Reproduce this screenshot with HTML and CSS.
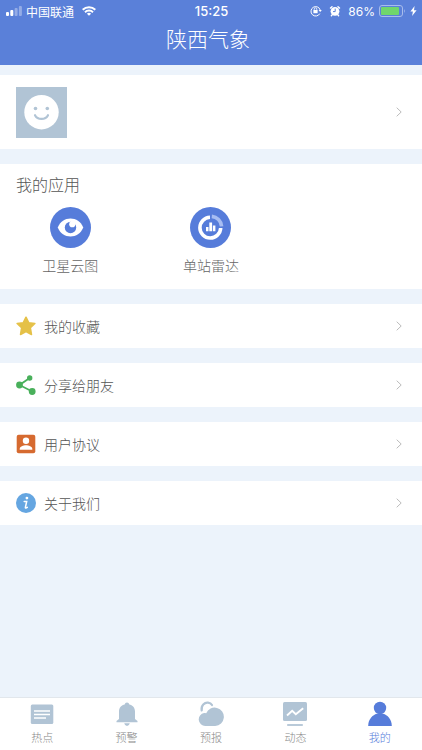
FILE: index.html
```
<!DOCTYPE html>
<html lang="zh-CN">
<head>
<meta charset="utf-8">
<meta name="viewport" content="width=device-width, initial-scale=1">
<title>陕西气象</title>
<link rel="stylesheet" href="styles.css">
</head>
<body>
<header class="header">
  <div class="status">
    <div class="status-side">
      <svg width="16" height="10" viewBox="0 0 16 10" fill="#fff" aria-hidden="true"><rect y="6" width="3" height="4" rx="1"/><rect x="4.3" y="4" width="3" height="6" rx="1"/><g opacity=".35"><rect x="8.6" y="2" width="3" height="8" rx="1"/><rect x="12.9" width="3" height="10" rx="1"/></g></svg>
      <span>中国联通</span>
      <svg class="wifi" width="14" height="10" viewBox="0 0 14 10" fill="none" stroke="#fff" stroke-width="2" aria-hidden="true"><path d="M.7 3.7a9 9 0 0 1 12.6 0M3 6.2a5.800 5.800 0 0 1 8 0"/><path d="M7 9.800 4.900 7.800a3 3 0 0 1 4.200 0z" fill="#fff" stroke="none"/></svg>
    </div>
    <time class="clock">15:25</time>
    <div class="status-side status-end">
      <svg width="12" height="12" viewBox="0 0 12 12" fill="none" stroke="#fff" aria-hidden="true"><path d="M9.8 8.600A4.700 4.700 0 1 1 10.200 5"/><path d="M8.600 4.900h3.200L10.200 7z" fill="#fff" stroke="none"/><path d="M4.200 5.200V4.100a1.300 1.300 0 0 1 2.600 0v1.100" stroke-width=".8"/><rect x="3.400" y="5" width="4.200" height="3.200" fill="#fff" stroke="none"/></svg>
      <svg class="alarm" width="12" height="12" viewBox="0 0 12 12" aria-hidden="true"><circle cx="6" cy="6.300" r="4.400" fill="#fff"/><path d="M1.500 3 3 1.700M10.500 3 9 1.700M3 10l-.6.700M9 10l.6.700" stroke="#fff" stroke-width="1.500" stroke-linecap="round"/><path d="M6.200 3.600v3H4" fill="none" stroke="#5a80d9"/></svg>
      <span class="percent">86%</span>
      <svg width="27" height="12" viewBox="0 0 27 12" aria-hidden="true"><rect x=".5" y=".5" width="23" height="11" rx="2.500" fill="none" stroke="#a9bdec"/><rect x="2" y="2" width="18" height="8" rx="1" fill="#70d66c"/><path d="M25 4q1.700 2 0 4z" fill="#a9bdec"/></svg>
      <svg width="7" height="10" viewBox="0 0 7 10" fill="#fff" aria-hidden="true"><path d="M4.600 0 .4 5.600h2.500L2.100 10l4.500-5.700H4z"/></svg>
    </div>
  </div>
  <h1 class="title">陕西气象</h1>
</header>

<main class="content">
  <a class="card profile" href="#profile" aria-label="个人资料">
    <svg class="avatar" width="51" height="51" viewBox="0 0 51 51" aria-hidden="true"><rect width="51" height="51" fill="#b1c4d5"/><circle cx="25.500" cy="25.200" r="17.200" fill="#fff"/><g fill="#b1c4d5"><circle cx="19.500" cy="21.500" r="1.800"/><circle cx="31.300" cy="21.500" r="1.800"/></g><path d="M19 28.200c2.600 5 10.400 5 13 0" fill="none" stroke="#b1c4d5" stroke-width="2.200" stroke-linecap="round"/></svg>
    <svg class="arrow" width="6" height="10" viewBox="0 0 6 10" aria-hidden="true"><path d="m.7.7 4.500 4.300L.7 9.300"/></svg>
  </a>

  <section class="card apps">
    <h2 class="apps-title">我的应用</h2>
    <div class="apps-grid">
      <a class="app" href="#satellite">
        <svg width="41" height="41" viewBox="0 0 41 41" aria-hidden="true"><circle cx="20.500" cy="20.500" r="20.500" fill="#567cda"/><path d="M7.700 20.500C10.200 14.600 15 11.500 20.500 11.500s10.300 3.100 12.800 9c-2.500 5.900-7.300 9-12.800 9s-10.300-3.100-12.800-9z" fill="#fff"/><circle cx="20.500" cy="20.500" r="5.700" fill="#567cda"/><circle cx="22.300" cy="17.200" r="3.100" fill="#fff"/></svg>
        <span>卫星云图</span>
      </a>
      <a class="app" href="#radar">
        <svg width="41" height="41" viewBox="0 0 41 41" aria-hidden="true"><circle cx="20.500" cy="20.500" r="20.500" fill="#567cda"/><g fill="none" stroke-width="3.600"><path d="M20 10.200a10.400 10.400 0 1 0 10.700 10.800" stroke="#fff"/><path d="M21.800 9.400a10.800 10.800 0 0 1 9.800 9.900" stroke="#a7bdf2"/></g><path d="M16 20h2.500v4.200H16zM19.300 15.500h2.800v8.700h-2.800zM22.900 18.500h2.500v5.700h-2.500z" fill="#fff"/></svg>
        <span>单站雷达</span>
      </a>
    </div>
  </section>

  <nav class="menu" aria-label="设置">
    <a class="card row" href="#favorites">
      <svg width="20" height="20" viewBox="0 0 20 20" aria-hidden="true"><path d="m10 1.200 2.700 5.500 6.200.8-4.500 4.300 1.100 6.700L10 15.500l-5.500 3 1.100-6.700L1.100 7.500l6.200-.8z" fill="#e5c148" stroke="#e5c148" stroke-width="1.500" stroke-linejoin="round"/></svg>
      <span>我的收藏</span>
      <svg class="arrow" width="6" height="10" viewBox="0 0 6 10" aria-hidden="true"><path d="m.7.7 4.500 4.300L.7 9.300"/></svg>
    </a>
    <a class="card row" href="#share">
      <svg width="20" height="20" viewBox="0 0 20 20" fill="#49b05b" aria-hidden="true"><path d="M13.700 3 3.500 10l12.700 6.500" fill="none" stroke="#49b05b" stroke-width="1.800"/><circle cx="13.700" cy="3" r="2.700"/><circle cx="3.500" cy="10" r="3.400"/><circle cx="16.200" cy="16.500" r="3.400"/></svg>
      <span>分享给朋友</span>
      <svg class="arrow" width="6" height="10" viewBox="0 0 6 10" aria-hidden="true"><path d="m.7.7 4.500 4.300L.7 9.300"/></svg>
    </a>
    <a class="card row" href="#agreement">
      <svg width="20" height="20" viewBox="0 0 20 20" aria-hidden="true"><rect x=".7" y=".7" width="18.600" height="18.600" rx="2" fill="#d66a30"/><circle cx="10" cy="6.800" r="3.200" fill="#fff"/><path d="M3.700 15.800v-.8c0-2.400 3.700-3.700 6.300-3.700s6.300 1.300 6.300 3.700v.8z" fill="#fff"/></svg>
      <span>用户协议</span>
      <svg class="arrow" width="6" height="10" viewBox="0 0 6 10" aria-hidden="true"><path d="m.7.7 4.500 4.300L.7 9.300"/></svg>
    </a>
    <a class="card row" href="#about">
      <svg width="20" height="20" viewBox="0 0 20 20" aria-hidden="true"><circle cx="10" cy="10" r="10" fill="#65a6e1"/><circle cx="10.900" cy="5.100" r="1.400" fill="#fff"/><path d="M8.200 8.500h2.500L9.400 14.300q-.1.900.6.700l1.300-.7" fill="none" stroke="#fff" stroke-width="1.500" stroke-linecap="round"/></svg>
      <span>关于我们</span>
      <svg class="arrow" width="6" height="10" viewBox="0 0 6 10" aria-hidden="true"><path d="m.7.7 4.500 4.300L.7 9.300"/></svg>
    </a>
  </nav>
</main>

<nav class="tabs" aria-label="主导航">
  <a class="tab" href="#hot">
    <svg width="26" height="26" viewBox="0 0 26 26" aria-hidden="true"><rect x="1.800" y="3.500" width="22.500" height="19.500" rx="1.500" fill="#b1c4d5"/><path d="M5 10h16M5 13.500h16M5 17h12" stroke="#fff" stroke-width="1.600"/></svg>
    <span>热点</span>
  </a>
  <a class="tab" href="#warning">
    <svg width="26" height="26" viewBox="0 0 26 26" fill="#b1c4d5" aria-hidden="true"><path d="M13 1.500c-1.300 0-2 .8-2 1.800C7.300 4.100 5 6.900 5 10.500V18l-2.500 2v1.200h21V20L21 18v-7.500c0-3.600-2.300-6.400-6-7.200 0-1-.7-1.800-2-1.800zM10.200 22.300h5.600q-.6 2.700-2.800 2.700t-2.800-2.700z"/></svg>
    <span>预警</span>
  </a>
  <a class="tab" href="#forecast">
    <svg width="26" height="26" viewBox="0 0 26 26" aria-hidden="true"><path d="M3.700 9.500C2.800 4.500 6.700 1.300 10 1.700q2.800.3 4 2.300" fill="none" stroke="#b1c4d5" stroke-width="2.200" stroke-linecap="round"/><path d="M7.300 25a6.500 6.500 0 0 1-1.200-12.900q1.100-.2 2.100.1a9.200 9.200 0 1 1 9 12.800z" fill="#b1c4d5"/></svg>
    <span>预报</span>
  </a>
  <a class="tab" href="#news">
    <svg width="26" height="26" viewBox="0 0 26 26" aria-hidden="true"><rect x="1" y="1" width="24" height="19" rx="1.500" fill="#b1c4d5"/><path d="M5.200 24h15.600" stroke="#b1c4d5" stroke-width="1.800"/><path d="m5 14.500 5.200-4.700 3.600 3.400 7.400-6" fill="none" stroke="#fff" stroke-width="1.900"/></svg>
    <span>动态</span>
  </a>
  <a class="tab tab-active" href="#mine" aria-current="page">
    <svg width="26" height="26" viewBox="0 0 26 26" fill="#567cda" aria-hidden="true"><circle cx="13" cy="7" r="6.200"/><path d="M1.200 25c0-7 4.500-11 8.600-12.300h6.400C20.300 14 24.800 18 24.800 25z"/></svg>
    <span>我的</span>
  </a>
</nav>
</body>
</html>
```
FILE: styles.css
```
* {
  box-sizing: border-box;
}

body {
  margin: 0;
  min-height: 100vh;
  display: flex;
  flex-direction: column;
  background: #ecf3fb;
  color: #555;
  font-family: "Liberation Sans", "Noto Sans CJK SC", sans-serif;
  font-weight: 300;
}

a {
  color: inherit;
  text-decoration: none;
}

svg {
  display: block;
  flex: none;
}

.header {
  padding-bottom: 7px;
  background: #5a80d9;
  color: #fff;
}

.status {
  display: flex;
  align-items: center;
  height: 22px;
  padding: 0 5px 0 6px;
  font-size: 12px;
}

.status-side {
  flex: 1;
  display: flex;
  align-items: center;
  gap: 4px;
  font-weight: 400;
}

.status-end {
  justify-content: flex-end;
}

.wifi {
  margin-left: 4px;
}

.alarm {
  margin: 0 3px;
}

.clock,
.percent {
  font-family: Inter, sans-serif;
}

.percent {
  font-size: 12px;
}

.clock {
  font-size: 13px;
  font-weight: 500;
}

.title {
  margin: 0;
  padding-right: 6px;
  font-size: 21px;
  line-height: 36px;
  font-weight: 300;
  text-align: center;
}

.content {
  flex: 1;
  display: flex;
  flex-direction: column;
  gap: 15px;
  padding: 10px 0 15px;
}

.card {
  background: #fff;
}

.profile,
.row {
  display: flex;
  align-items: center;
  padding: 0 20px 0 16px;
}

.profile {
  height: 74px;
}

.arrow {
  margin-left: auto;
  fill: none;
  stroke: #bbb;
  stroke-width: 1;
}

.apps {
  padding: 10px 0 13px;
}

.apps-title {
  margin: 0 0 9px 16px;
  font-size: 16px;
  line-height: 24px;
  font-weight: 300;
}

.apps-grid {
  display: grid;
  grid-template-columns: repeat(3, 1fr);
}

.app {
  display: flex;
  flex-direction: column;
  align-items: center;
  gap: 8px;
  color: #666;
  font-size: 14px;
  line-height: 20px;
}

.menu {
  display: flex;
  flex-direction: column;
  gap: 15px;
}

.row {
  height: 44px;
  gap: 8px;
  font-size: 14px;
}

.tabs {
  display: flex;
  height: 53px;
  padding-top: 3px;
  background: #fff;
  border-top: 1px solid #e2e7ec;
}

.tab {
  flex: 1;
  display: flex;
  flex-direction: column;
  align-items: center;
  gap: 3px;
  color: #888;
  font-size: 11px;
  line-height: 16px;
}

.tab-active {
  color: #567cda;
}
```
